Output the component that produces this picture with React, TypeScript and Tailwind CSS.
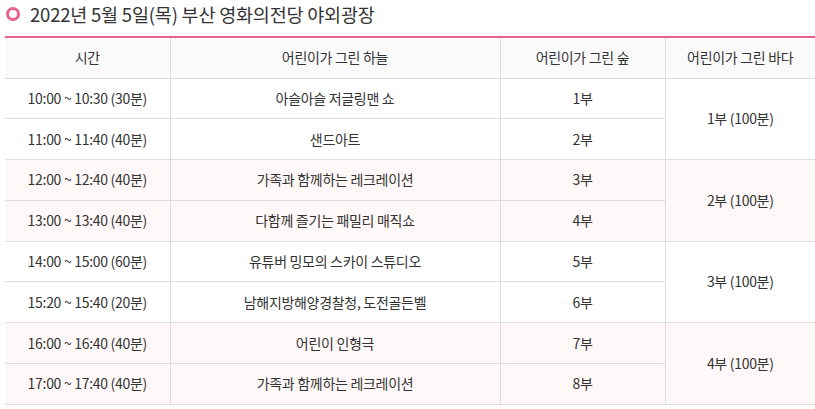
import React from 'react';

type Row = { time: string; sky: string; forest: string };

const groups: { sea: string; pink: boolean; rows: Row[] }[] = [
  {
    sea: '1부 (100분)',
    pink: false,
    rows: [
      { time: '10:00 ~ 10:30 (30분)', sky: '아슬아슬 저글링맨 쇼', forest: '1부' },
      { time: '11:00 ~ 11:40 (40분)', sky: '샌드아트', forest: '2부' },
    ],
  },
  {
    sea: '2부 (100분)',
    pink: true,
    rows: [
      { time: '12:00 ~ 12:40 (40분)', sky: '가족과 함께하는 레크레이션', forest: '3부' },
      { time: '13:00 ~ 13:40 (40분)', sky: '다함께 즐기는 패밀리 매직쇼', forest: '4부' },
    ],
  },
  {
    sea: '3부 (100분)',
    pink: false,
    rows: [
      { time: '14:00 ~ 15:00 (60분)', sky: '유튜버 밍모의 스카이 스튜디오', forest: '5부' },
      { time: '15:20 ~ 15:40 (20분)', sky: '남해지방해양경찰청, 도전골든벨', forest: '6부' },
    ],
  },
  {
    sea: '4부 (100분)',
    pink: true,
    rows: [
      { time: '16:00 ~ 16:40 (40분)', sky: '어린이 인형극', forest: '7부' },
      { time: '17:00 ~ 17:40 (40분)', sky: '가족과 함께하는 레크레이션', forest: '8부' },
    ],
  },
];

const font = { fontFamily: '"Noto Sans CJK KR", "Noto Sans", sans-serif' };

export default function App() {
  return (
    <div className="w-[815px] h-[409px] bg-white overflow-hidden text-[#333]" style={font}>
      {/* Title */}
      <div className="flex items-center gap-[10px] pl-[6px] h-[28px]">
        <span className="w-[14px] h-[14px] rounded-full border-[3.5px] border-[#e8628f]" />
        <h2 className="text-[18.5px] leading-none tracking-[-0.2px] text-[#333]">2022년 5월 5일(목) 부산 영화의전당 야외광장</h2>
      </div>

      {/* Table */}
      <table className="ml-[5px] mt-[8px] w-[810px] border-collapse table-fixed text-[14px] tracking-[-0.3px]">
        <colgroup>
          <col className="w-[165px]" />
          <col className="w-[330px]" />
          <col className="w-[165px]" />
          <col className="w-[150px]" />
        </colgroup>
        <thead>
          <tr className="h-[41px] bg-[#fafafa] border-t-2 border-[#e8628f]">
            <th className="font-normal border-b border-r border-[#dedede]">시간</th>
            <th className="font-normal border-b border-r border-[#dedede]">어린이가 그린 하늘</th>
            <th className="font-normal border-b border-r border-[#dedede]">어린이가 그린 숲</th>
            <th className="font-normal border-b border-[#dedede]">어린이가 그린 바다</th>
          </tr>
        </thead>
        <tbody>
          {groups.map((g) =>
            g.rows.map((r, i) => (
              <tr key={r.time} className={`h-[40.8px] ${g.pink ? 'bg-[#fff8f9]' : 'bg-white'}`}>
                <td className="text-center border-b border-r border-[#dedede]">{r.time}</td>
                <td className="text-center border-b border-r border-[#dedede]">{r.sky}</td>
                <td className="text-center border-b border-r border-[#dedede]">{r.forest}</td>
                {i === 0 && (
                  <td rowSpan={2} className="text-center border-b border-[#dedede]">
                    {g.sea}
                  </td>
                )}
              </tr>
            ))
          )}
        </tbody>
      </table>
    </div>
  );
}
